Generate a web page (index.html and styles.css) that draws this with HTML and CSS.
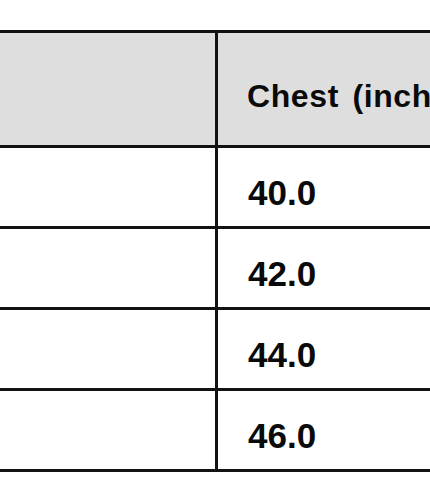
FILE: index.html
```html
<!DOCTYPE html>
<html>
<head>
<meta charset="utf-8">
<link rel="stylesheet" href="styles.css">
</head>
<body>
<div class="viewport">
  <div class="size-table">
    <div class="cell head"></div>
    <div class="cell head">Chest (inches)</div>
    <div class="cell"></div>
    <div class="cell num">40.0</div>
    <div class="cell"></div>
    <div class="cell num">42.0</div>
    <div class="cell"></div>
    <div class="cell num">44.0</div>
    <div class="cell"></div>
    <div class="cell num">46.0</div>
  </div>
</div>
</body>
</html>
```
FILE: styles.css
```css
html, body {
  margin: 0;
  padding: 0;
  background: #fff;
}
.viewport {
  width: 430px;
  height: 502px;
  overflow: hidden;
  padding-top: 30px;
  box-sizing: border-box;
}
.size-table {
  display: grid;
  grid-template-columns: 215px 300px;
  grid-template-rows: 112px 78px 78px 78px 78px;
  gap: 3px;
  padding: 3px 0;
  background: #121212;
  width: 518px;
  font-family: "Liberation Sans", Arial, sans-serif;
  font-weight: bold;
  color: #0a0a0a;
}
.cell {
  background: #fff;
  white-space: nowrap;
  overflow: hidden;
}
.cell.head {
  background: #dedede;
  font-size: 32px;
  line-height: 32px;
  letter-spacing: 0.6px;
  word-spacing: 4px;
  padding: 47px 0 0 29px;
  box-sizing: border-box;
}
.cell.num {
  font-size: 35px;
  line-height: 35px;
  padding: 27px 0 0 30px;
  box-sizing: border-box;
}
```
